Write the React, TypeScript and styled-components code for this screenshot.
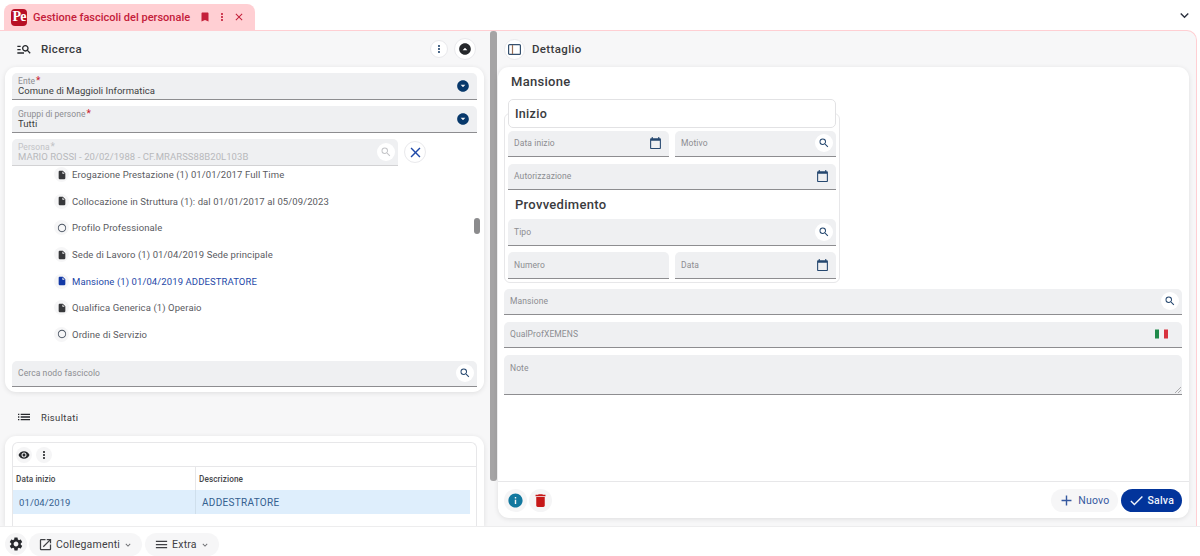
import React from 'react';
import styled, { createGlobalStyle } from 'styled-components';
import {
  MdAdd,
  MdArrowDropDownCircle,
  MdBookmark,
  MdCalendarToday,
  MdCheck,
  MdClose,
  MdDelete,
  MdExpandMore,
  MdInfo,
  MdInsertDriveFile,
  MdKeyboardArrowDown,
  MdList,
  MdManageSearch,
  MdMenu,
  MdMoreVert,
  MdOpenInNew,
  MdRadioButtonUnchecked,
  MdSearch,
  MdSettings,
  MdVisibility
} from 'react-icons/md';

const GlobalStyle = createGlobalStyle`
  html, body { margin: 0; padding: 0; height: 100%; background: #fff; overflow: hidden; }
  body { font-family: Roboto, "Liberation Sans", sans-serif; color: #2b2b2b; }
  * { box-sizing: border-box; }
`;

const Page = styled.div`
  width: 1200px;
  height: 556px;
  display: flex;
  flex-direction: column;
  overflow: hidden;
`;

const TabBar = styled.div`
  height: 30px;
  flex: none;
  display: flex;
  align-items: flex-end;
  justify-content: space-between;
  padding: 0 7px 0 4px;
  background: #fff;
`;

const Tab = styled.div`
  width: 251px;
  height: 26px;
  display: flex;
  align-items: center;
  padding: 0 10px 0 7px;
  background: #ffcfd3;
  border-radius: 8px 8px 0 0;
  color: #c4203a;
  font-size: 11px;
  font-weight: 500;
`;

const Logo = styled.span`
  width: 16px;
  height: 17px;
  flex: none;
  display: flex;
  align-items: center;
  justify-content: center;
  border-radius: 4px;
  background: #b80f24;
  color: #fff;
  font-family: "Liberation Serif", serif;
  font-size: 14px;
  font-weight: 700;
  letter-spacing: -1px;
  margin-right: 6px;
`;

const TabTitle = styled.span`
  flex: 1;
  white-space: nowrap;
`;

const TabActions = styled.span`
  display: flex;
  align-items: center;
  gap: 5px;
  color: #c4203a;

  svg { display: block; }
`;

const TopChevron = styled.div`
  align-self: center;
  color: #2c3240;
  display: flex;
  font-size: 17px;
`;

const Workspace = styled.div`
  flex: 1;
  min-height: 0;
  margin-right: 3px;
  display: flex;
  background: #f7f7f8;
  border-top: 1px solid #ffcfd3;
  border-right: 1px solid #ffcfd3;
  border-top-right-radius: 10px;
  overflow: hidden;
`;

const LeftColumn = styled.div`
  width: 490px;
  flex: none;
  padding: 0 6px 0 5px;
  display: flex;
  flex-direction: column;
  overflow: hidden;
`;

const Splitter = styled.div`
  width: 7px;
  height: 450px;
  flex: none;
  background: #a5a4a5;
  border-radius: 3px;
`;

const RightColumn = styled.div`
  flex: 1;
  min-width: 0;
  padding: 0 7px 8px 1px;
  display: flex;
  flex-direction: column;
`;

const PanelHeader = styled.div<{ $height: number; $top?: number; $left?: number }>`
  height: ${({ $height }) => $height}px;
  flex: none;
  display: flex;
  align-items: center;
  gap: 6px;
  padding: ${({ $top }) => $top || 0}px 8px 0 ${({ $left }) => $left ?? 11}px;
`;

const HeaderIcon = styled.span`
  width: 16px;
  display: flex;
  justify-content: center;
  font-size: 16px;
  color: #26282c;
  margin-right: 2px;
`;

const PanelTitle = styled.span<{ $small?: boolean }>`
  font-size: ${({ $small }) => ($small ? '9.5px' : '11.5px')};
  font-weight: ${({ $small }) => ($small ? 400 : 500)};
  letter-spacing: 0.35px;
  color: #3a3b3e;
  margin-left: 1px;
  margin-right: auto;
`;

const RoundButton = styled.button<{ $size: number; $color?: string; $shade?: boolean }>`
  width: ${({ $size }) => $size}px;
  height: ${({ $size }) => $size}px;
  flex: none;
  padding: 0;
  display: flex;
  align-items: center;
  justify-content: center;
  border-radius: 50%;
  border: ${({ $shade }) => ($shade ? 'none' : '1px solid #e9e9ec')};
  background: ${({ $shade }) => ($shade ? '#f5f5f6' : '#fff')};
  color: ${({ $color }) => $color || '#26282c'};
  font-size: 14px;
`;

const UpArrow = styled(MdArrowDropDownCircle)`
  transform: rotate(180deg);
`;

const Card = styled.div`
  background: #fff;
  border-radius: 11px;
  box-shadow: 0 1px 5px rgba(0, 0, 0, 0.1);
`;

const SearchCard = styled(Card)`
  height: 325px;
  flex: none;
  padding: 6px 7px 0;
  display: flex;
  flex-direction: column;
`;

const Field = styled.div<{ $height?: number; $disabled?: boolean; $grow?: boolean; $filled?: boolean }>`
  height: ${({ $height }) => $height || 26.5}px;
  flex: ${({ $grow }) => ($grow ? '1 1 0' : 'none')};
  min-width: 0;
  position: relative;
  display: flex;
  flex-direction: column;
  justify-content: ${({ $filled, $height }) => ($filled || $height ? 'flex-start' : 'center')};
  padding: ${({ $filled, $height }) => ($height ? '8px' : $filled ? '2.5px' : '0')} 6px 0;
  background: #eff0f2;
  border-radius: 5px 5px 0 0;
  border-bottom: ${({ $disabled }) => ($disabled ? '1px solid #d2d2d4' : '1.5px solid #8d8d90')};
`;

const FloatLabel = styled.span<{ $disabled?: boolean }>`
  font-size: 8.5px;
  line-height: 9px;
  letter-spacing: 0.05px;
  color: ${({ $disabled }) => ($disabled ? '#c2c3c6' : '#8c8d91')};
`;

const Required = styled.span<{ $disabled?: boolean }>`
  color: ${({ $disabled }) => ($disabled ? '#c2c3c6' : '#c8202f')};
  font-size: 10px;
  margin-left: 1px;
`;

const FieldValue = styled.span<{ $disabled?: boolean }>`
  font-size: 9.5px;
  line-height: 9px;
  letter-spacing: 0.05px;
  color: ${({ $disabled }) => ($disabled ? '#b8b9bc' : '#3d3e41')};
  white-space: nowrap;
`;

const Placeholder = styled.span`
  font-size: 8.5px;
  letter-spacing: 0.1px;
  color: #8c8d91;
`;

const FieldAdorn = styled.span<{ $right: number; $color?: string; $disc?: boolean }>`
  position: absolute;
  top: 50%;
  right: ${({ $right }) => $right}px;
  transform: translateY(-50%);
  width: ${({ $disc }) => ($disc ? '18px' : 'auto')};
  height: ${({ $disc }) => ($disc ? '18px' : 'auto')};
  display: flex;
  align-items: center;
  justify-content: center;
  border-radius: 50%;
  background: ${({ $disc }) => ($disc ? '#fff' : 'transparent')};
  color: ${({ $color }) => $color || '#25476f'};
`;

const FieldStack = styled.div`
  display: flex;
  flex-direction: column;
  gap: 6.5px;
`;

const PersonRow = styled.div`
  display: flex;
  align-items: center;
  gap: 6px;
`;

const PersonField = styled(Field)`
  width: 386px;
`;

const TreeArea = styled.div`
  height: 184px;
  flex: none;
  margin: 1px -3px 0 0;
  position: relative;
  overflow: hidden;
`;

const TreeRow = styled.div<{ $active?: boolean }>`
  height: 26.6px;
  display: flex;
  align-items: center;
  gap: 3px;
  padding-left: 42px;
  font-size: 9.5px;
  letter-spacing: 0.1px;
  white-space: nowrap;
  color: ${({ $active }) => ($active ? '#1e48a8' : '#5a5b5f')};
`;

const TreeList = styled.div`
  margin-top: -5px;
`;

const TreeIcon = styled.span<{ $active?: boolean; $empty?: boolean }>`
  width: 15px;
  height: 15px;
  flex: none;
  border-radius: 50%;
  display: flex;
  align-items: center;
  justify-content: center;
  background: #f6f6f7;
  color: ${({ $active, $empty }) => ($active ? '#1339a6' : $empty ? '#4b5563' : '#37383b')};
  font-size: 10px;
`;

const TreeThumb = styled.div`
  position: absolute;
  right: 0;
  top: 51px;
  width: 6px;
  height: 16px;
  border-radius: 3px;
  background: #8b8b8d;
`;

const NodeSearch = styled(Field)`
  margin-top: 10px;
`;

const ResultsCard = styled(Card)`
  flex: 1;
  min-height: 0;
  padding: 6px 7px 0;
  overflow: hidden;
  border-radius: 11px 11px 0 0;
`;

const ResultsBox = styled.div`
  height: 100%;
  border-top: 1px solid #e7e7e9;
  border-left: 1px solid #e7e7e9;
  border-right: 1px solid #e7e7e9;
  border-radius: 6px 6px 0 0;
  display: flex;
  flex-direction: column;
`;

const ResultsTools = styled.div`
  height: 24px;
  flex: none;
  display: flex;
  align-items: center;
  gap: 4px;
  padding-left: 3px;
  border-bottom: 1px solid #e7e7e9;
`;

const Table = styled.div`
  display: grid;
  grid-template-columns: 183px 274px;
`;

const HeadCell = styled.div<{ $first?: boolean }>`
  height: 23px;
  display: flex;
  align-items: center;
  padding-left: 3px;
  font-size: 8.2px;
  font-weight: 500;
  letter-spacing: 0.1px;
  color: #45464a;
  border-right: ${({ $first }) => ($first ? '1px solid #e7e7e9' : 'none')};
`;

const BodyCell = styled.div<{ $first?: boolean }>`
  height: 24px;
  display: flex;
  align-items: center;
  padding-left: 6px;
  font-size: ${({ $first }) => ($first ? '9.5px' : '10px')};
  letter-spacing: ${({ $first }) => ($first ? '0.1px' : '0.3px')};
  color: #34608f;
  background: #deeefc;
  border-right: ${({ $first }) => ($first ? '1px solid #cfdfec' : 'none')};
`;

const DetailCard = styled(Card)`
  flex: 1;
  min-height: 0;
  display: flex;
  flex-direction: column;
`;

const DetailBody = styled.div`
  flex: 1;
  min-height: 0;
  padding: 6px 7px 0 6px;
  display: flex;
  flex-direction: column;
`;

const SectionTitle = styled.div<{ $indent: number }>`
  font-size: 13px;
  line-height: 18px;
  font-weight: 500;
  letter-spacing: 0.3px;
  color: #3a3b3e;
  padding-left: ${({ $indent }) => $indent}px;
`;

const InizioGroup = styled.div`
  width: 336px;
  margin-top: 22px;
  padding: 0 3px 3.5px;
  border: 1px solid #e7e7e9;
  border-radius: 6px;
  display: flex;
  flex-direction: column;
`;

const GroupHead = styled.div`
  height: 29px;
  margin: -15px 0 2.5px;
  padding-left: 6px;
  display: flex;
  align-items: center;
  background: #fff;
  border: 1px solid #e2e2e4;
  border-radius: 5px;
  font-size: 12.5px;
  font-weight: 500;
  letter-spacing: 0.3px;
  color: #3a3b3e;
`;

const GroupRow = styled.div`
  display: flex;
  gap: 6px;
`;

const SubTitle = styled(SectionTitle)`
  margin: 5.5px 0 5.5px;
`;

const OuterFields = styled(FieldStack)`
  margin-top: 5.5px;
`;

const Flag = styled.span`
  display: flex;
  width: 13px;
  height: 9px;

  i { flex: 1; }
  i:nth-child(1) { background: #1f8a4a; }
  i:nth-child(2) { background: #f2f2f2; }
  i:nth-child(3) { background: #d8323e; }
`;

const ResizeGrip = styled.svg`
  position: absolute;
  right: 1px;
  bottom: 1px;
`;

const DetailFooter = styled.div`
  height: 37px;
  flex: none;
  border-top: 1px solid #e7e7e9;
  display: flex;
  align-items: center;
  gap: 2px;
  padding: 0 7px 0 6px;
`;

const FooterSpacer = styled.span`
  flex: 1;
`;

const PillButton = styled.button<{ $primary?: boolean }>`
  height: 23px;
  margin-left: 1px;
  padding: 0 8px 0 7px;
  display: flex;
  align-items: center;
  gap: 3px;
  border: none;
  border-radius: 12px;
  background: ${({ $primary }) => ($primary ? '#02349b' : '#f6f6f7')};
  color: ${({ $primary }) => ($primary ? '#f1f4fb' : '#35589f')};
  font-family: inherit;
  font-size: 10.5px;
  font-weight: ${({ $primary }) => ($primary ? 500 : 400)};
  letter-spacing: 0.2px;
`;

const PageFooter = styled.div`
  height: 30px;
  flex: none;
  display: flex;
  align-items: flex-start;
  gap: 2px;
  padding: 6px 0 0 5px;
  background: #fff;
  border-top: 1px solid #ededee;
`;

const FooterButton = styled.button`
  height: 23px;
  padding: 0 9px;
  display: flex;
  align-items: center;
  gap: 3px;
  border: none;
  border-radius: 12px;
  background: #f6f6f7;
  color: #3f4044;
  font-family: inherit;
  font-size: 10.5px;
  letter-spacing: 0.2px;

  & + & { margin-left: 1px; }
`;

const SmallChevron = styled(MdKeyboardArrowDown)`
  color: #6a6b6f;
`;

const treeRows = [
  { label: 'Erogazione Prestazione (1) 01/01/2017 Full Time' },
  { label: 'Collocazione in Struttura (1): dal 01/01/2017 al 05/09/2023' },
  { label: 'Profilo Professionale', empty: true },
  { label: 'Sede di Lavoro (1) 01/04/2019 Sede principale' },
  { label: 'Mansione (1) 01/04/2019 ADDESTRATORE', active: true },
  { label: 'Qualifica Generica (1) Operaio' },
  { label: 'Ordine di Servizio', empty: true }
];

const SearchAdorn: React.FC<{ muted?: boolean }> = ({ muted }) => (
  <FieldAdorn $right={3} $disc $color={muted ? '#c4c5c8' : '#25476f'}>
    <MdSearch size={12} />
  </FieldAdorn>
);

const CalendarAdorn = () => (
  <FieldAdorn $right={7}>
    <MdCalendarToday size={13} />
  </FieldAdorn>
);

const SelectAdorn = () => (
  <FieldAdorn $right={7} $color='#07386b'>
    <MdArrowDropDownCircle size={14} />
  </FieldAdorn>
);

export default function App() {
  return (
    <Page>
      <GlobalStyle />
      <TabBar>
        <Tab>
          <Logo>Pe</Logo>
          <TabTitle>Gestione fascicoli del personale</TabTitle>
          <TabActions>
            <MdBookmark size={12} />
            <MdMoreVert size={12} />
            <MdClose size={12} />
          </TabActions>
        </Tab>
        <TopChevron>
          <MdExpandMore />
        </TopChevron>
      </TabBar>

      <Workspace>
        <LeftColumn>
          <PanelHeader $height={36}>
            <HeaderIcon>
              <MdManageSearch />
            </HeaderIcon>
            <PanelTitle>Ricerca</PanelTitle>
            <RoundButton $size={18} $color='#25476f'>
              <MdMoreVert size={12} />
            </RoundButton>
            <RoundButton $size={22}>
              <UpArrow size={14} />
            </RoundButton>
          </PanelHeader>

          <SearchCard>
            <FieldStack>
              <Field $filled>
                <FloatLabel>
                  Ente<Required>*</Required>
                </FloatLabel>
                <FieldValue>Comune di Maggioli Informatica</FieldValue>
                <SelectAdorn />
              </Field>
              <Field $filled>
                <FloatLabel>
                  Gruppi di persone<Required>*</Required>
                </FloatLabel>
                <FieldValue>Tutti</FieldValue>
                <SelectAdorn />
              </Field>
              <PersonRow>
                <PersonField $disabled $filled>
                  <FloatLabel $disabled>
                    Persona<Required $disabled>*</Required>
                  </FloatLabel>
                  <FieldValue $disabled>MARIO ROSSI - 20/02/1988 - CF.MRARSS88B20L103B</FieldValue>
                  <SearchAdorn muted />
                </PersonField>
                <RoundButton $size={22} $color='#1e48a8'>
                  <MdClose size={17} />
                </RoundButton>
              </PersonRow>
            </FieldStack>

            <TreeArea>
              <TreeList>
                {treeRows.map(row => (
                  <TreeRow key={row.label} $active={row.active}>
                    <TreeIcon $active={row.active} $empty={row.empty}>
                      {row.empty ? <MdRadioButtonUnchecked /> : <MdInsertDriveFile />}
                    </TreeIcon>
                    {row.label}
                  </TreeRow>
                ))}
              </TreeList>
              <TreeThumb />
            </TreeArea>

            <NodeSearch>
              <Placeholder>Cerca nodo fascicolo</Placeholder>
              <SearchAdorn />
            </NodeSearch>
          </SearchCard>

          <PanelHeader $height={44} $top={6}>
            <HeaderIcon>
              <MdList />
            </HeaderIcon>
            <PanelTitle $small>Risultati</PanelTitle>
          </PanelHeader>

          <ResultsCard>
            <ResultsBox>
              <ResultsTools>
                <RoundButton $size={16} $shade>
                  <MdVisibility size={12} />
                </RoundButton>
                <RoundButton $size={16} $shade>
                  <MdMoreVert size={12} />
                </RoundButton>
              </ResultsTools>
              <Table>
                <HeadCell $first>Data inizio</HeadCell>
                <HeadCell>Descrizione</HeadCell>
                <BodyCell $first>01/04/2019</BodyCell>
                <BodyCell>ADDESTRATORE</BodyCell>
              </Table>
            </ResultsBox>
          </ResultsCard>
        </LeftColumn>

        <Splitter />

        <RightColumn>
          <PanelHeader $height={36} $left={6}>
            <RoundButton $size={21}>
              <svg width='13' height='11' viewBox='0 0 13 11' fill='none' aria-hidden='true'>
                <rect x='0.6' y='0.6' width='11.8' height='9.8' rx='1' stroke='#35506e' strokeWidth='1.2' />
                <path d='M4.5 1v9' stroke='#9a6f55' strokeWidth='1.2' />
              </svg>
            </RoundButton>
            <PanelTitle>Dettaglio</PanelTitle>
          </PanelHeader>

          <DetailCard>
            <DetailBody>
              <SectionTitle $indent={7}>Mansione</SectionTitle>

              <InizioGroup>
                <GroupHead>Inizio</GroupHead>
                <FieldStack>
                  <GroupRow>
                    <Field $grow>
                      <Placeholder>Data inizio</Placeholder>
                      <CalendarAdorn />
                    </Field>
                    <Field $grow>
                      <Placeholder>Motivo</Placeholder>
                      <SearchAdorn />
                    </Field>
                  </GroupRow>
                  <Field>
                    <Placeholder>Autorizzazione</Placeholder>
                    <CalendarAdorn />
                  </Field>
                </FieldStack>
                <SubTitle $indent={7}>Provvedimento</SubTitle>
                <FieldStack>
                  <Field>
                    <Placeholder>Tipo</Placeholder>
                    <SearchAdorn />
                  </Field>
                  <GroupRow>
                    <Field $grow>
                      <Placeholder>Numero</Placeholder>
                    </Field>
                    <Field $grow>
                      <Placeholder>Data</Placeholder>
                      <CalendarAdorn />
                    </Field>
                  </GroupRow>
                </FieldStack>
              </InizioGroup>

              <OuterFields>
                <Field>
                  <Placeholder>Mansione</Placeholder>
                  <SearchAdorn />
                </Field>
                <Field>
                  <Placeholder>QualProfXEMENS</Placeholder>
                  <FieldAdorn $right={14}>
                    <Flag>
                      <i />
                      <i />
                      <i />
                    </Flag>
                  </FieldAdorn>
                </Field>
                <Field $height={40}>
                  <Placeholder>Note</Placeholder>
                  <ResizeGrip width='7' height='7' viewBox='0 0 7 7' aria-hidden='true'>
                    <path d='M1 7l6-6M4 7l3-3' stroke='#9a9a9d' strokeWidth='0.8' />
                  </ResizeGrip>
                </Field>
              </OuterFields>
            </DetailBody>

            <DetailFooter>
              <RoundButton $size={23} $shade $color='#12789f'>
                <MdInfo size={17} />
              </RoundButton>
              <RoundButton $size={23} $shade $color='#c61818'>
                <MdDelete size={17} />
              </RoundButton>
              <FooterSpacer />
              <PillButton>
                <MdAdd size={17} />
                Nuovo
              </PillButton>
              <PillButton $primary>
                <MdCheck size={17} />
                Salva
              </PillButton>
            </DetailFooter>
          </DetailCard>
        </RightColumn>
      </Workspace>

      <PageFooter>
        <RoundButton $size={22} $shade>
          <MdSettings size={16} />
        </RoundButton>
        <FooterButton>
          <MdOpenInNew size={15} />
          Collegamenti
          <SmallChevron size={10} />
        </FooterButton>
        <FooterButton>
          <MdMenu size={15} />
          Extra
          <SmallChevron size={10} />
        </FooterButton>
      </PageFooter>
    </Page>
  );
}
